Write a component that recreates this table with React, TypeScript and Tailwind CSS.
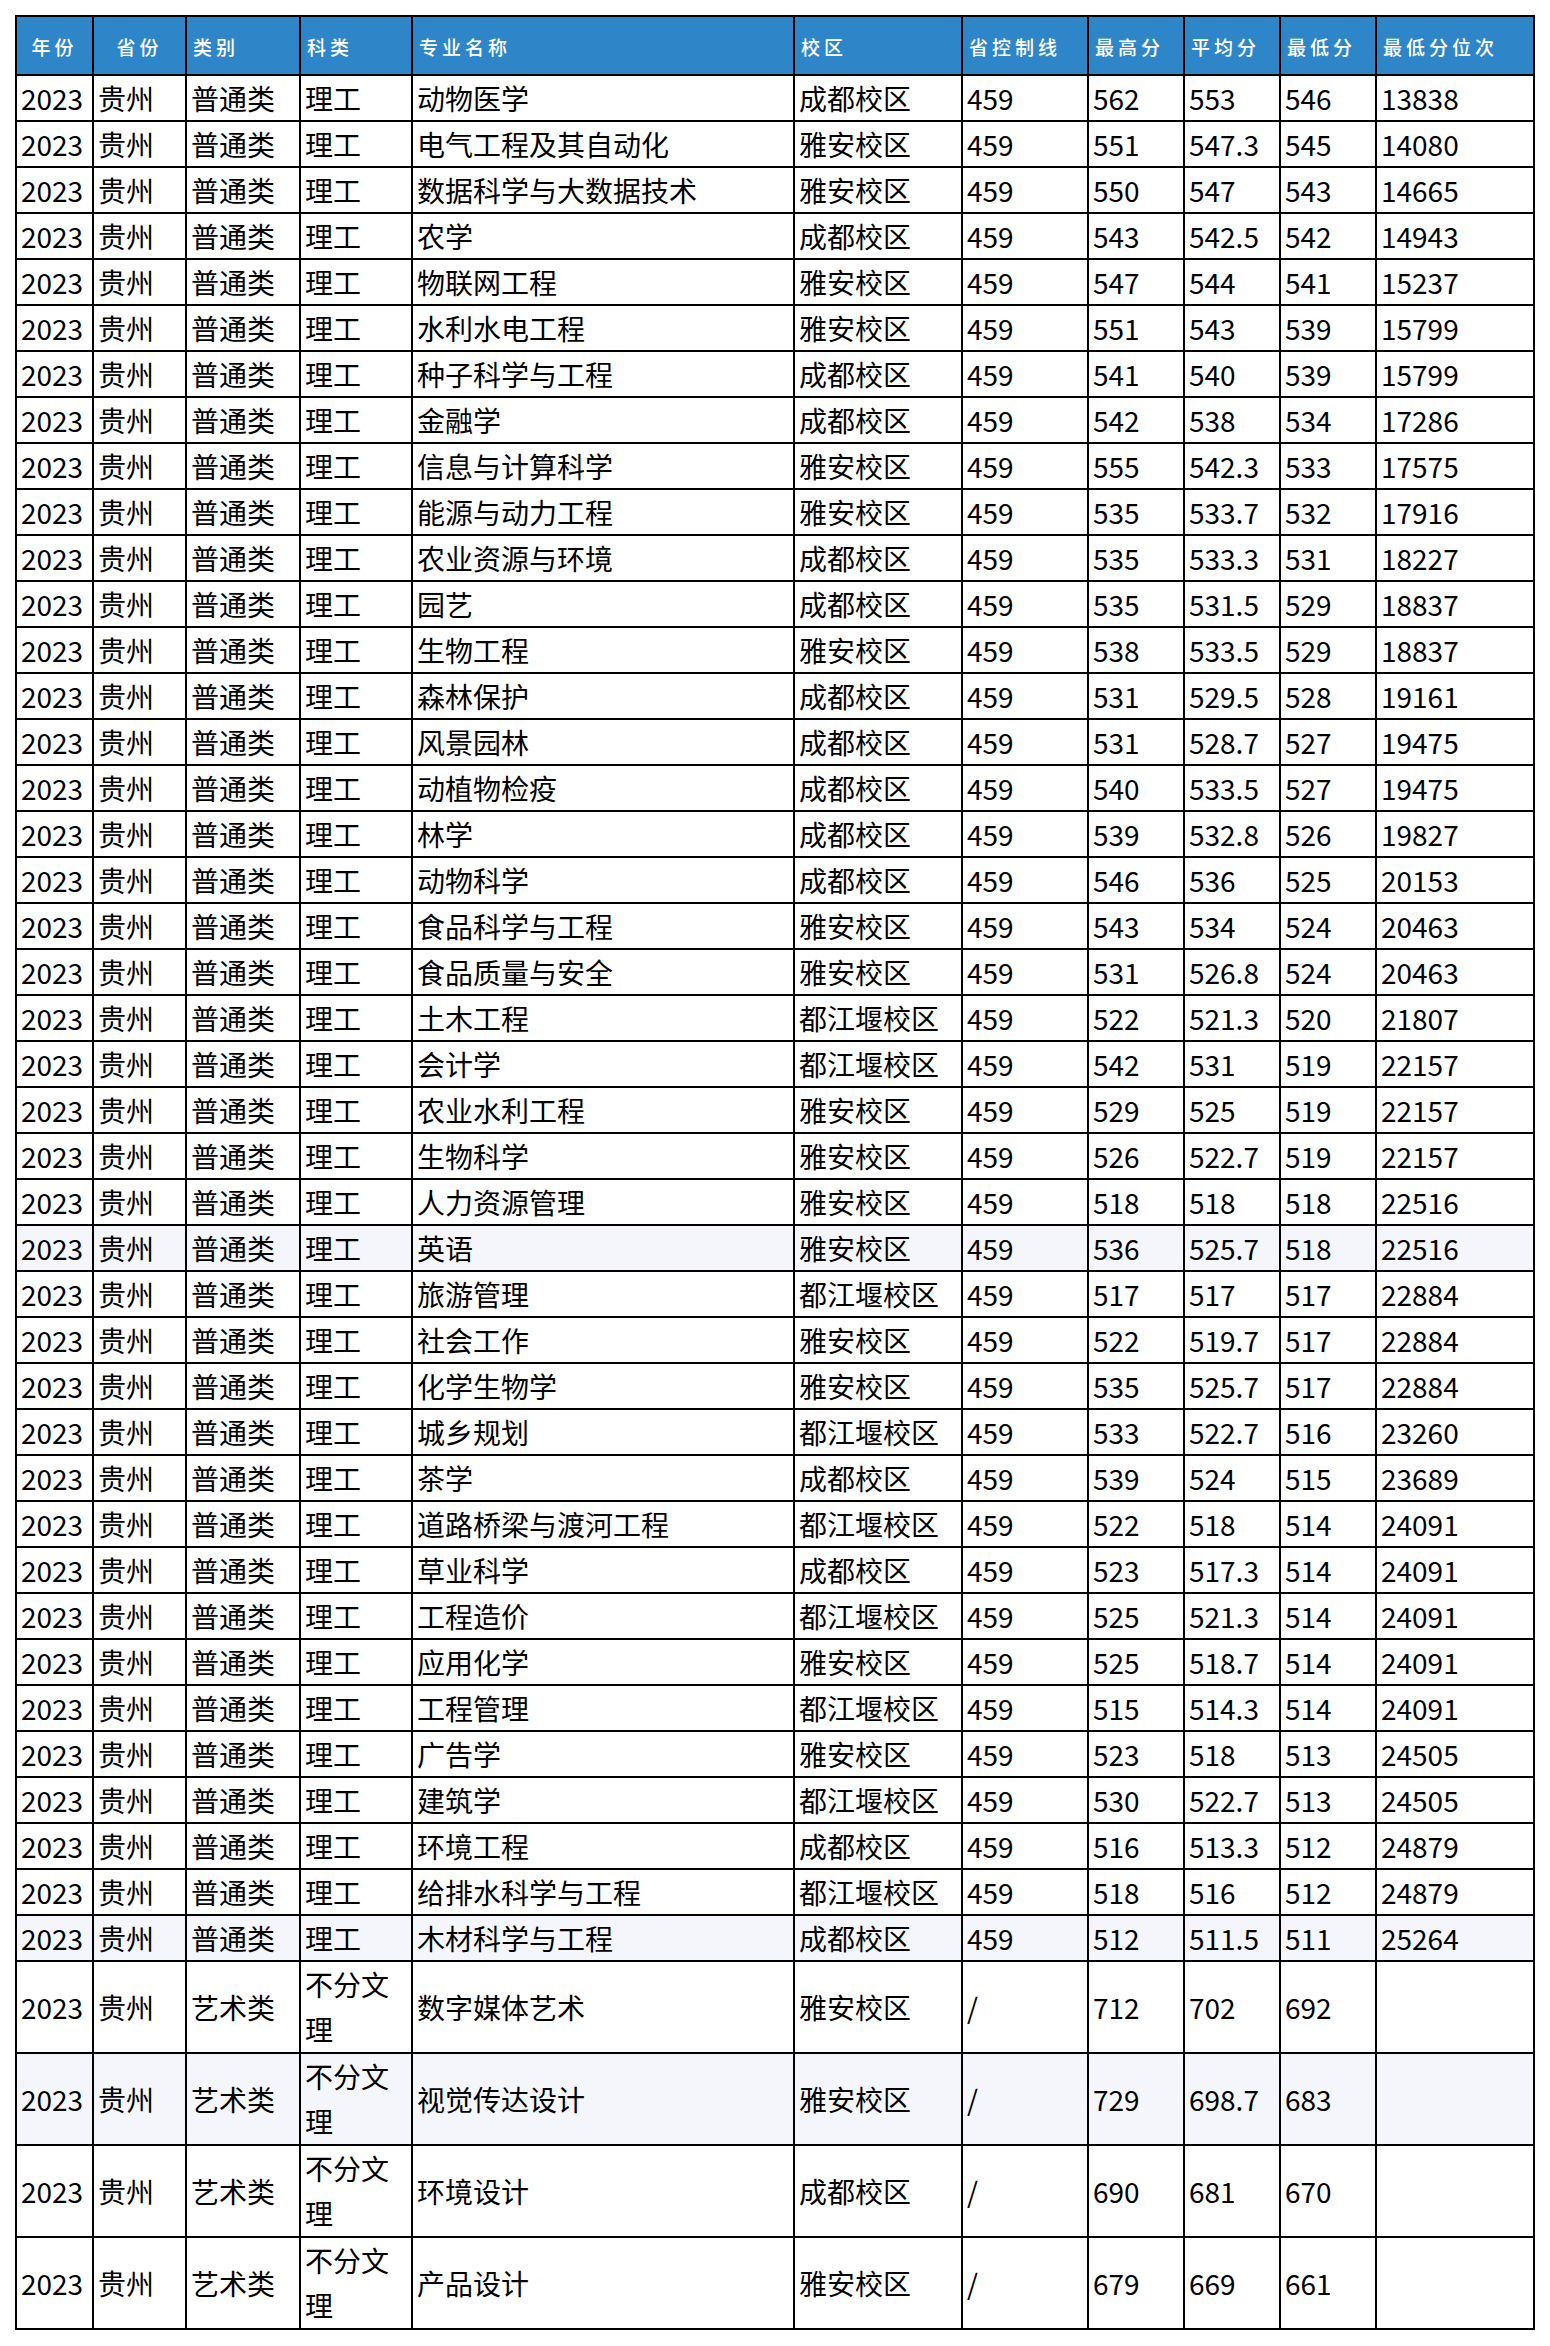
import React from "react";

type Row = [string, string, string, string, string, string, string, string, string, string, string];

const normal: [string, string, string, string, string, string, string][] = [
  ["动物医学", "成都校区", "562", "553", "546", "13838", ""],
  ["电气工程及其自动化", "雅安校区", "551", "547.3", "545", "14080", ""],
  ["数据科学与大数据技术", "雅安校区", "550", "547", "543", "14665", ""],
  ["农学", "成都校区", "543", "542.5", "542", "14943", ""],
  ["物联网工程", "雅安校区", "547", "544", "541", "15237", ""],
  ["水利水电工程", "雅安校区", "551", "543", "539", "15799", ""],
  ["种子科学与工程", "成都校区", "541", "540", "539", "15799", ""],
  ["金融学", "成都校区", "542", "538", "534", "17286", ""],
  ["信息与计算科学", "雅安校区", "555", "542.3", "533", "17575", ""],
  ["能源与动力工程", "雅安校区", "535", "533.7", "532", "17916", ""],
  ["农业资源与环境", "成都校区", "535", "533.3", "531", "18227", ""],
  ["园艺", "成都校区", "535", "531.5", "529", "18837", ""],
  ["生物工程", "雅安校区", "538", "533.5", "529", "18837", ""],
  ["森林保护", "成都校区", "531", "529.5", "528", "19161", ""],
  ["风景园林", "成都校区", "531", "528.7", "527", "19475", ""],
  ["动植物检疫", "成都校区", "540", "533.5", "527", "19475", ""],
  ["林学", "成都校区", "539", "532.8", "526", "19827", ""],
  ["动物科学", "成都校区", "546", "536", "525", "20153", ""],
  ["食品科学与工程", "雅安校区", "543", "534", "524", "20463", ""],
  ["食品质量与安全", "雅安校区", "531", "526.8", "524", "20463", ""],
  ["土木工程", "都江堰校区", "522", "521.3", "520", "21807", ""],
  ["会计学", "都江堰校区", "542", "531", "519", "22157", ""],
  ["农业水利工程", "雅安校区", "529", "525", "519", "22157", ""],
  ["生物科学", "雅安校区", "526", "522.7", "519", "22157", ""],
  ["人力资源管理", "雅安校区", "518", "518", "518", "22516", ""],
  ["英语", "雅安校区", "536", "525.7", "518", "22516", "hl"],
  ["旅游管理", "都江堰校区", "517", "517", "517", "22884", ""],
  ["社会工作", "雅安校区", "522", "519.7", "517", "22884", ""],
  ["化学生物学", "雅安校区", "535", "525.7", "517", "22884", ""],
  ["城乡规划", "都江堰校区", "533", "522.7", "516", "23260", ""],
  ["茶学", "成都校区", "539", "524", "515", "23689", ""],
  ["道路桥梁与渡河工程", "都江堰校区", "522", "518", "514", "24091", ""],
  ["草业科学", "成都校区", "523", "517.3", "514", "24091", ""],
  ["工程造价", "都江堰校区", "525", "521.3", "514", "24091", ""],
  ["应用化学", "雅安校区", "525", "518.7", "514", "24091", ""],
  ["工程管理", "都江堰校区", "515", "514.3", "514", "24091", ""],
  ["广告学", "雅安校区", "523", "518", "513", "24505", ""],
  ["建筑学", "都江堰校区", "530", "522.7", "513", "24505", ""],
  ["环境工程", "成都校区", "516", "513.3", "512", "24879", ""],
  ["给排水科学与工程", "都江堰校区", "518", "516", "512", "24879", ""],
  ["木材科学与工程", "成都校区", "512", "511.5", "511", "25264", "hl"],
];

const art: [string, string, string, string, string, string][] = [
  ["数字媒体艺术", "雅安校区", "712", "702", "692", ""],
  ["视觉传达设计", "雅安校区", "729", "698.7", "683", "hl"],
  ["环境设计", "成都校区", "690", "681", "670", ""],
  ["产品设计", "雅安校区", "679", "669", "661", ""],
];

const headers: { t: string; c?: boolean }[] = [
  { t: "年份", c: true },
  { t: "省份", c: true },
  { t: "类别" },
  { t: "科类" },
  { t: "专业名称" },
  { t: "校区" },
  { t: "省控制线" },
  { t: "最高分" },
  { t: "平均分" },
  { t: "最低分" },
  { t: "最低分位次" },
];

const widths = [77, 93, 114, 112, 382, 168, 126, 96, 96, 96, 158];

export default function App() {
  const rows: { cells: string[]; hl: boolean; tall: boolean }[] = [];
  normal.forEach((r) => {
    rows.push({
      cells: ["2023", "贵州", "普通类", "理工", r[0], r[1], "459", r[2], r[3], r[4], r[5]],
      hl: r[6] === "hl",
      tall: false,
    });
  });
  art.forEach((r) => {
    rows.push({
      cells: ["2023", "贵州", "艺术类", "不分文理", r[0], r[1], "/", r[2], r[3], r[4], ""],
      hl: r[5] === "hl",
      tall: true,
    });
  });

  return (
    <div className="bg-white min-h-[2346px] w-[1550px] pt-[15px] pl-[15px] font-['Noto_Sans_CJK_SC','Noto_Sans',sans-serif] text-black">
      <table className="border-collapse table-fixed w-[1520px]">
        <colgroup>
          {widths.map((w, i) => (
            <col key={i} style={{ width: w }} />
          ))}
        </colgroup>
        <thead>
          <tr className="bg-[#2e86c8] h-[59px]">
            {headers.map((h, i) => (
              <th
                key={i}
                className={`border-2 border-black text-white font-medium text-[19px] tracking-[4px] px-[6px] pt-[4px] align-middle ${
                  h.c ? "text-center" : "text-left"
                }`}
              >
                {h.t}
              </th>
            ))}
          </tr>
        </thead>
        <tbody>
          {rows.map((r, ri) => (
            <tr key={ri} className={r.hl ? "bg-[#f4f6fb]" : "bg-white"}>
              {r.cells.map((c, ci) => (
                <td
                  key={ci}
                  className={`border-2 border-black text-[28px] px-[4px] py-0 align-middle text-left break-all ${
                    r.tall ? "leading-[45px]" : "leading-[44px]"
                  }`}
                >
                  {c}
                </td>
              ))}
            </tr>
          ))}
        </tbody>
      </table>
    </div>
  );
}
